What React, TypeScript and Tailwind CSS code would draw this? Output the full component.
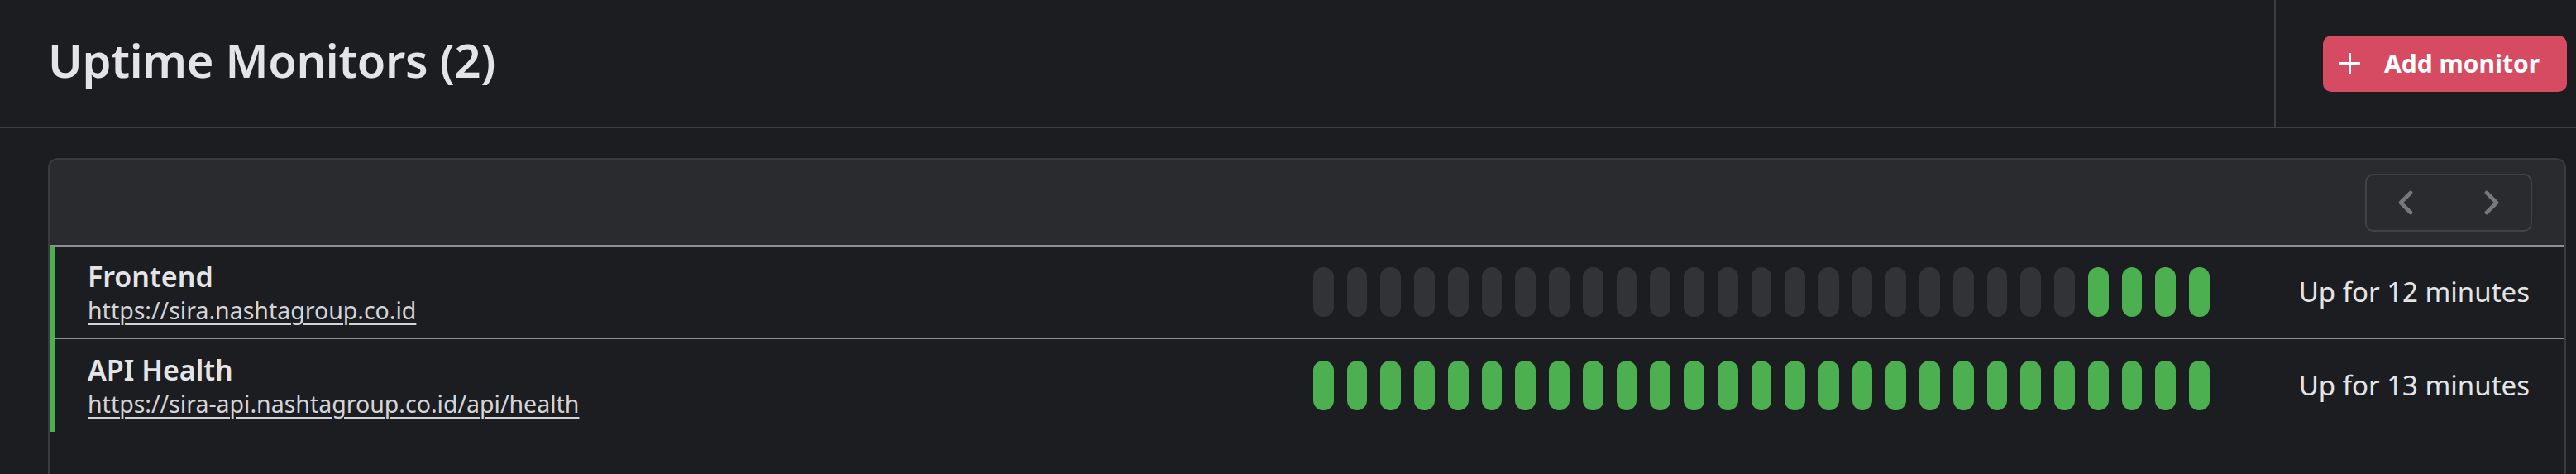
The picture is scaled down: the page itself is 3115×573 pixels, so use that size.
import { ChevronLeft, ChevronRight } from "lucide-react";

interface Monitor {
  name: string;
  url: string;
  beats: number[];
  status: string;
}

const monitors: Monitor[] = [
  {
    name: "Frontend",
    url: "https://sira.nashtagroup.co.id",
    beats: [...Array(23).fill(0), 1, 1, 1, 1],
    status: "Up for 12 minutes",
  },
  {
    name: "API Health",
    url: "https://sira-api.nashtagroup.co.id/api/health",
    beats: Array(27).fill(1),
    status: "Up for 13 minutes",
  },
];

function PlusIcon() {
  return (
    <svg width="27" height="27" viewBox="0 0 27 27" fill="none">
      <path d="M13.5 1v25M1 13.5h25" stroke="white" strokeWidth="3" />
    </svg>
  );
}

function MonitorRow({ monitor, last }: { monitor: Monitor; last: boolean }) {
  return (
    <div className="flex h-[112px]">
      <div className="w-[7px] bg-[#4caf50]" />
      <div
        className={`flex flex-1 items-center ${
          last ? "" : "border-b-2 border-[#8f8f8f]"
        }`}
      >
        <div className="flex-1 pl-[39px]">
          <div className="text-[34px] font-semibold leading-[44px] text-[#e4e4e7]">
            {monitor.name}
          </div>
          <a
            href="#"
            className="text-[28.5px] leading-[38px] text-[#d4d4d8] underline underline-offset-[5px] decoration-[2px]"
          >
            {monitor.url}
          </a>
        </div>
        <div className="flex w-[1084px] gap-[16px]">
          {monitor.beats.map((b, i) => (
            <div
              key={i}
              className={`h-[60px] flex-1 rounded-[12px] ${
                b ? "bg-[#4caf50]" : "bg-[#323336]"
              }`}
            />
          ))}
        </div>
        <div className="w-[429px] pr-[42px] text-right text-[33px] text-[#e4e4e7]">
          {monitor.status}
        </div>
      </div>
    </div>
  );
}

export default function App() {
  return (
    <div
      className="min-h-screen bg-[#1c1d20]"
      style={{ fontFamily: '"Noto Sans", "Open Sans", sans-serif' }}
    >
      {/* Header */}
      <div className="flex h-[155px] border-b-2 border-[#3d3e42]">
        <div className="flex flex-1 items-center pb-[10px] pl-[58px]">
          <h1 className="text-[56px] font-semibold tracking-[-0.3px] text-[#e4e4e7]">
            Uptime Monitors (2)
          </h1>
        </div>
        <div className="flex items-center border-l-2 border-[#3d3e42] pl-[57px] pr-[11px]">
          <button className="flex h-[68px] w-[295px] items-center gap-[28px] rounded-[10px] bg-[#d64b62] pl-[19px] text-[30px] font-bold text-white">
            <PlusIcon />
            Add monitor
          </button>
        </div>
      </div>

      {/* Monitor list */}
      <div className="pl-[58px] pr-[12px] pt-[36px]">
        <div className="overflow-hidden rounded-t-[12px] border-2 border-b-0 border-[#3a3b3f] pb-[60px]">
          <div className="flex h-[105px] items-center justify-end border-b-2 border-[#8f8f8f] bg-[#2a2b2e] pr-[39px]">
            <div className="flex h-[70px] w-[202px] items-center justify-center gap-[56px] rounded-[10px] border-2 border-[#414246]">
              <ChevronLeft size={48} strokeWidth={2.3} className="text-[#77787c]" />
              <ChevronRight size={48} strokeWidth={2.3} className="text-[#77787c]" />
            </div>
          </div>
          {monitors.map((m, i) => (
            <MonitorRow key={m.name} monitor={m} last={i === monitors.length - 1} />
          ))}
        </div>
      </div>
    </div>
  );
}
